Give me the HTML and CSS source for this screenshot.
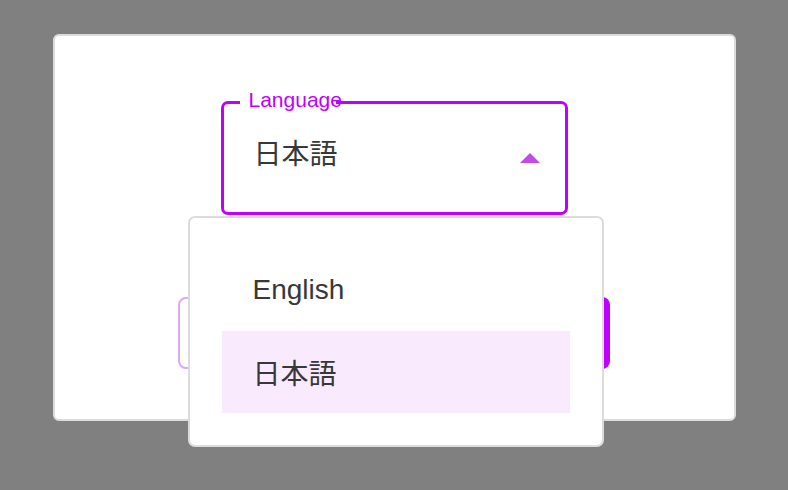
FILE: index.html
```html
<!DOCTYPE html>
<html lang="ja">
<head>
<meta charset="utf-8">
<title>Language</title>
<link rel="stylesheet" href="styles.css">
</head>
<body>
<div class="card">
  <div class="field">
    <div class="select">
      <span class="value">日本語</span>
      <svg class="arrow" width="20" height="10" viewBox="0 0 20 10"><polygon points="0,10 10,0 20,10" fill="#c04ce8"/></svg>
    </div>
    <span class="notch"></span>
    <span class="label">Language</span>
    <ul class="menu">
      <li class="item">English</li>
      <li class="item selected">日本語</li>
    </ul>
  </div>
  <div class="actions">
    <button class="btn outline" aria-label="Cancel"></button>
    <button class="btn filled" aria-label="OK"></button>
  </div>
</div>
</body>
</html>
```

FILE: styles.css
```css
html, body {
  margin: 0;
  padding: 0;
}
body {
  background: #808080;
  font-family: "Liberation Sans", "Noto Sans CJK JP", sans-serif;
  height: 490px;
  overflow: hidden;
}
.card {
  box-sizing: border-box;
  width: 683px;
  height: 387px;
  margin: 34px auto 0;
  background: #fff;
  border: 2px solid #dcdcdc;
  border-radius: 6px;
  display: flex;
  flex-direction: column;
  align-items: center;
  padding: 65px 0 50px;
  gap: 82px;
}
.field {
  position: relative;
  width: 347px;
  height: 114px;
}
.select {
  box-sizing: border-box;
  width: 100%;
  height: 100%;
  border: 3px solid #bf00ff;
  border-radius: 7px;
  display: flex;
  align-items: center;
  justify-content: space-between;
  padding: 0 25px 0 30px;
}
.value {
  font-size: 28px;
  color: #383838;
  line-height: 32px;
  margin-top: -7px;
}
.arrow {
  display: block;
}
.notch {
  position: absolute;
  left: 19px;
  top: 0;
  width: 96px;
  height: 3px;
  background: #fff;
}
.label {
  position: absolute;
  left: 28px;
  top: -12px;
  font-size: 21px;
  line-height: 21px;
  color: #bf00ff;
}
.menu {
  position: absolute;
  left: -33px;
  top: 115px;
  box-sizing: border-box;
  width: 416px;
  margin: 0;
  padding: 31px 32px 32px;
  list-style: none;
  background: #fff;
  border: 2px solid #dcdcdc;
  border-radius: 7px;
  z-index: 2;
}
.item {
  height: 82px;
  display: flex;
  align-items: center;
  padding-left: 31px;
  font-size: 28px;
  color: #383838;
}
.selected {
  background: #faeafe;
}
.actions {
  display: flex;
  gap: 20px;
  width: 432px;
  height: 72px;
}
.btn {
  flex: 1;
  height: 72px;
  border-radius: 8px;
  margin: 0;
  padding: 0;
}
.outline {
  background: #fff;
  border: 2px solid #dcaaf0;
}
.filled {
  background: #bf00ff;
  border: none;
}
```
